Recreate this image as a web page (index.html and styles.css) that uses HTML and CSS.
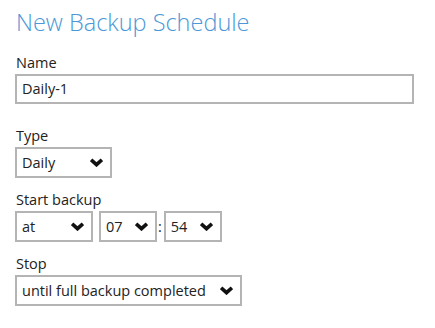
FILE: index.html
```html
<!DOCTYPE html>
<html lang="en">
<head>
    <meta charset="UTF-8">
    <title>New Backup Schedule</title>
    <link rel="stylesheet" href="styles.css">
</head>
<body>

    <!-- Formulario de horario -->
    <div class="schedule">
        <h1 class="title">New Backup Schedule</h1>

        <div class="field field-name">
            <label class="label">Name</label>
            <div class="text-input">Daily-1</div>
        </div>

        <div class="field">
            <label class="label">Type</label>
            <div class="select w-type">
                <span>Daily</span>
                <svg class="chev" viewBox="0 0 12 8"><path d="M1 1.5 L6 6 L11 1.5"/></svg>
            </div>
        </div>

        <div class="field">
            <label class="label">Start backup</label>
            <div class="row">
                <div class="select w-at">
                    <span>at</span>
                    <svg class="chev" viewBox="0 0 12 8"><path d="M1 1.5 L6 6 L11 1.5"/></svg>
                </div>
                <div class="select w-time">
                    <span>07</span>
                    <svg class="chev" viewBox="0 0 12 8"><path d="M1 1.5 L6 6 L11 1.5"/></svg>
                </div>
                <span class="colon">:</span>
                <div class="select w-time">
                    <span>54</span>
                    <svg class="chev" viewBox="0 0 12 8"><path d="M1 1.5 L6 6 L11 1.5"/></svg>
                </div>
            </div>
        </div>

        <div class="field">
            <label class="label">Stop</label>
            <div class="select w-stop">
                <span>until full backup completed</span>
                <svg class="chev" viewBox="0 0 12 8"><path d="M1 1.5 L6 6 L11 1.5"/></svg>
            </div>
        </div>
    </div>

</body>
</html>
```

FILE: styles.css
```css
body {
    margin: 0;
    background-color: #fff;
    font-family: "Open Sans", "Noto Sans", sans-serif;
    color: #222;
}
.schedule {
    padding: 5px 21px 0 15px;
}
.title {
    margin: 0 0 14px 1px;
    font-size: 23.5px;
    font-weight: 300;
    line-height: 34px;
    color: #4a98d8;
}
.field {
    margin-bottom: 12px;
}
.field-name {
    margin-bottom: 22px;
}
.label {
    display: block;
    margin: 0 0 1px 1px;
    font-size: 14.5px;
    line-height: 20px;
}
.text-input {
    height: 26px;
    border: 2px solid #b4b4b4;
    padding: 0 5px;
    font-size: 14.5px;
    line-height: 26px;
}
.row {
    display: flex;
    align-items: center;
    gap: 6px;
}
.select {
    display: flex;
    align-items: center;
    justify-content: space-between;
    box-sizing: border-box;
    height: 31px;
    border: 2px solid #b4b4b4;
    padding: 0 7px 0 5px;
    font-size: 14.5px;
}
.w-type { width: 97px; }
.w-at { width: 78px; }
.w-time { width: 58px; }
.w-stop { width: 227px; }
.colon {
    font-size: 14.5px;
    margin: 0 -4px 0 -5px;
}
.chev {
    width: 13px;
    height: 9px;
    fill: none;
    stroke: #111;
    stroke-width: 3.4;
}
```
